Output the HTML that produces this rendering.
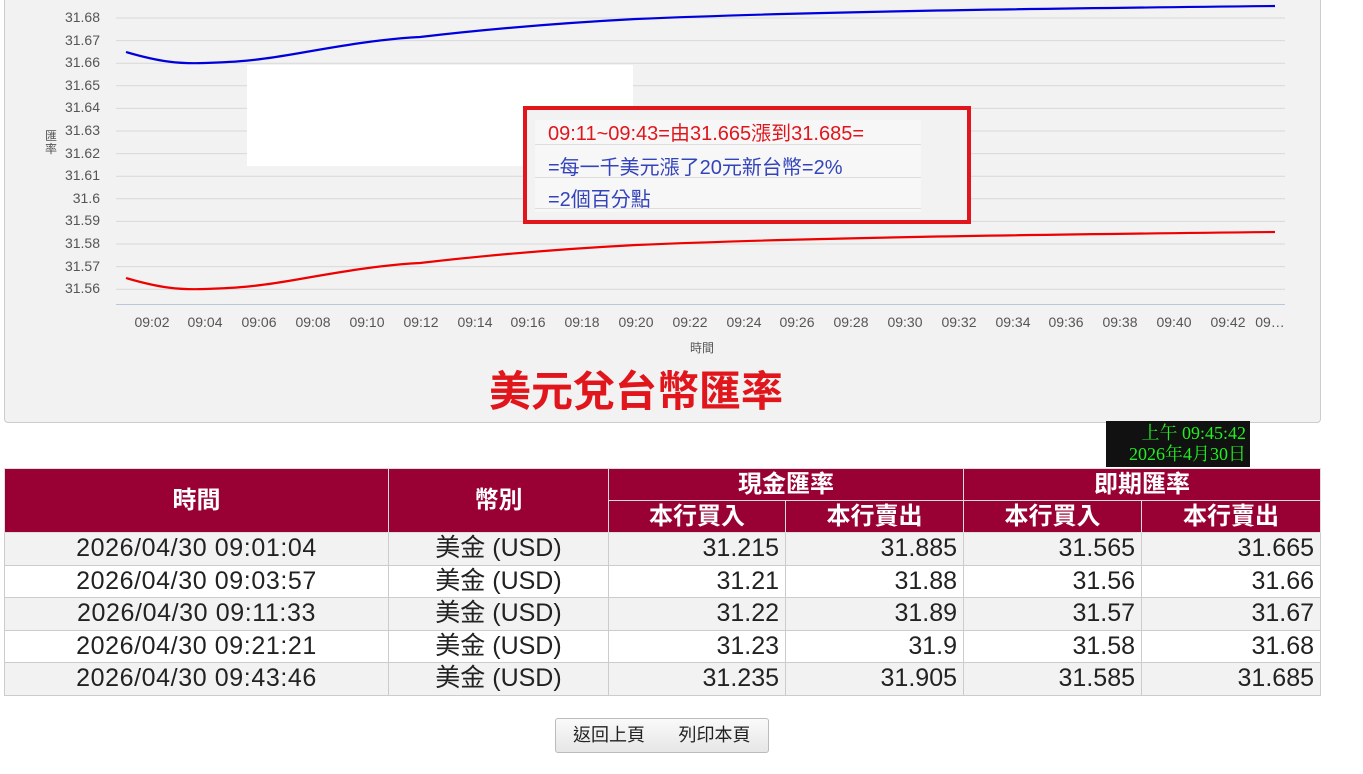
<!DOCTYPE html>
<html><head><meta charset="utf-8"><style>
body{margin:0;width:1363px;height:774px;background:#fff;position:relative;overflow:hidden;font-family:"Liberation Sans","Noto Sans CJK TC",sans-serif}
.abs{position:absolute}
table{position:absolute;left:4px;top:468px;width:1317px;border-collapse:collapse;font-size:25px;color:#222}
th{background:#990033;color:#fff;font-weight:bold;border:1px solid #ddd;height:31px;padding:0;line-height:31px;font-size:24px}
td{border:1px solid #ccc;height:31.5px;padding:0 6px;line-height:31px}
tr.g td{background:#f2f2f2}
td.r{text-align:right}td.c{text-align:center}
td.t{text-align:center;letter-spacing:0.6px}
.btn{position:absolute;top:718px;height:33px;line-height:33px;font-size:18px;background:linear-gradient(#fafafa,#e6e6e6);border:1px solid #bbb;color:#222;text-align:center}
</style></head><body>
<div class="abs" style="left:4px;top:-10px;width:1315px;height:431px;background:#f2f2f2;border:1px solid #ccc;border-radius:4px"></div>
<svg class="abs" style="left:0;top:0" width="1330" height="360">
<g stroke="#d8d8d8" stroke-width="1">
<line x1="116" x2="1285" y1="18" y2="18"/><line x1="116" x2="1285" y1="40.6" y2="40.6"/><line x1="116" x2="1285" y1="63.2" y2="63.2"/><line x1="116" x2="1285" y1="85.8" y2="85.8"/><line x1="116" x2="1285" y1="108.4" y2="108.4"/><line x1="116" x2="1285" y1="131" y2="131"/><line x1="116" x2="1285" y1="153.6" y2="153.6"/><line x1="116" x2="1285" y1="176.2" y2="176.2"/><line x1="116" x2="1285" y1="198.8" y2="198.8"/><line x1="116" x2="1285" y1="221.4" y2="221.4"/><line x1="116" x2="1285" y1="244" y2="244"/><line x1="116" x2="1285" y1="266.6" y2="266.6"/><line x1="116" x2="1285" y1="289.2" y2="289.2"/>
</g>
<line x1="116" x2="1285" y1="304.5" y2="304.5" stroke="#b8c8dc"/>
<g font-size="14" fill="#555" text-anchor="end" font-family="Liberation Sans,sans-serif">
<text x="100" y="22">31.68</text><text x="100" y="45">31.67</text><text x="100" y="67">31.66</text><text x="100" y="90">31.65</text><text x="100" y="112">31.64</text><text x="100" y="135">31.63</text><text x="100" y="158">31.62</text><text x="100" y="180">31.61</text><text x="100" y="203">31.6</text><text x="100" y="225">31.59</text><text x="100" y="248">31.58</text><text x="100" y="271">31.57</text><text x="100" y="293">31.56</text>
</g>
<text x="45" y="140" font-size="12" fill="#555" font-family="Noto Sans CJK TC,sans-serif">匯</text>
<text x="45" y="153" font-size="12" fill="#555" font-family="Noto Sans CJK TC,sans-serif">率</text>
<g font-size="14" fill="#555" text-anchor="middle" font-family="Liberation Sans,sans-serif">
<text x="152" y="327">09:02</text><text x="205" y="327">09:04</text><text x="259" y="327">09:06</text><text x="313" y="327">09:08</text><text x="367" y="327">09:10</text><text x="421" y="327">09:12</text><text x="475" y="327">09:14</text><text x="528" y="327">09:16</text><text x="582" y="327">09:18</text><text x="636" y="327">09:20</text><text x="690" y="327">09:22</text><text x="744" y="327">09:24</text><text x="797" y="327">09:26</text><text x="851" y="327">09:28</text><text x="905" y="327">09:30</text><text x="959" y="327">09:32</text><text x="1013" y="327">09:34</text><text x="1066" y="327">09:36</text><text x="1120" y="327">09:38</text><text x="1174" y="327">09:40</text><text x="1228" y="327">09:42</text><text x="1270" y="327">09…</text>
</g>
<text x="702" y="352" font-size="12" fill="#555" text-anchor="middle" font-family="Noto Sans CJK TC,sans-serif">時間</text>
<path d="M126,52 C160,62 180,64 205,63 C240,62 260,60 300,53 C340,46 380,39 420,37 C480,30 560,23 636,19 C800,12 1000,9 1275,6" fill="none" stroke="#0000dd" stroke-width="2.2"/>
<path d="M126,278 C160,288 180,290 205,289 C240,288 260,286 300,279 C340,272 380,265 420,263 C480,256 560,249 636,245 C800,238 1000,235 1275,232" fill="none" stroke="#ee0000" stroke-width="2.2"/>
</svg>
<div class="abs" style="left:247px;top:65px;width:386px;height:101px;background:#fff"></div>
<div class="abs" style="left:523px;top:106px;width:440px;height:110px;border:4px solid #e0161c;background:#f2f2f2"></div>
<div class="abs" style="left:535px;top:120px;width:386px;height:92px;background:linear-gradient(#f7f7f7 0 24px,#ddd 24px 25px,#f7f7f7 25px 57px,#ddd 57px 58px,#f7f7f7 58px 88px,#ddd 88px 89px,#f7f7f7 89px)"></div>
<div class="abs" style="left:548px;top:117px;font-size:20px;line-height:34px;font-family:'Liberation Sans','Noto Sans CJK TC',sans-serif">
<div style="color:#e0161c">09:11~09:43=由31.665漲到31.685=</div>
<div style="color:#3344bb">=每一千美元漲了20元新台幣=2%</div>
<div style="color:#3344bb;line-height:30px">=2個百分點</div>
</div>
<div class="abs" style="left:0;width:1272px;top:358px;text-align:center;color:#e0161c;font-size:42px;font-weight:bold;font-family:'Noto Sans CJK TC',sans-serif">美元兌台幣匯率</div>
<div class="abs" style="left:1106px;top:421px;width:144px;height:46px;background:#111;color:#22ee22;font-family:'Liberation Serif','Noto Serif CJK SC',serif;font-size:18px;line-height:21px;text-align:right;padding-right:4px;box-sizing:border-box;padding-top:2px">上午 09:45:42<br>2026年4月30日</div>
<table>
<tr><th rowspan="2" style="width:383px">時間</th><th rowspan="2" style="width:219px">幣別</th><th colspan="2">現金匯率</th><th colspan="2">即期匯率</th></tr>
<tr><th style="width:176px">本行買入</th><th style="width:177px">本行賣出</th><th style="width:177px">本行買入</th><th>本行賣出</th></tr>
<tr class="g"><td class="t">2026/04/30 09:01:04</td><td class="c">美金 (USD)</td><td class="r">31.215</td><td class="r">31.885</td><td class="r">31.565</td><td class="r">31.665</td></tr>
<tr><td class="t">2026/04/30 09:03:57</td><td class="c">美金 (USD)</td><td class="r">31.21</td><td class="r">31.88</td><td class="r">31.56</td><td class="r">31.66</td></tr>
<tr class="g"><td class="t">2026/04/30 09:11:33</td><td class="c">美金 (USD)</td><td class="r">31.22</td><td class="r">31.89</td><td class="r">31.57</td><td class="r">31.67</td></tr>
<tr><td class="t">2026/04/30 09:21:21</td><td class="c">美金 (USD)</td><td class="r">31.23</td><td class="r">31.9</td><td class="r">31.58</td><td class="r">31.68</td></tr>
<tr class="g"><td class="t">2026/04/30 09:43:46</td><td class="c">美金 (USD)</td><td class="r">31.235</td><td class="r">31.905</td><td class="r">31.585</td><td class="r">31.685</td></tr>
</table>
<div class="btn" style="left:555px;width:106px;border-radius:3px 0 0 3px">返回上頁</div>
<div class="btn" style="left:661px;width:107px;border-left:none;border-radius:0 3px 3px 0">列印本頁</div>
</body></html>
